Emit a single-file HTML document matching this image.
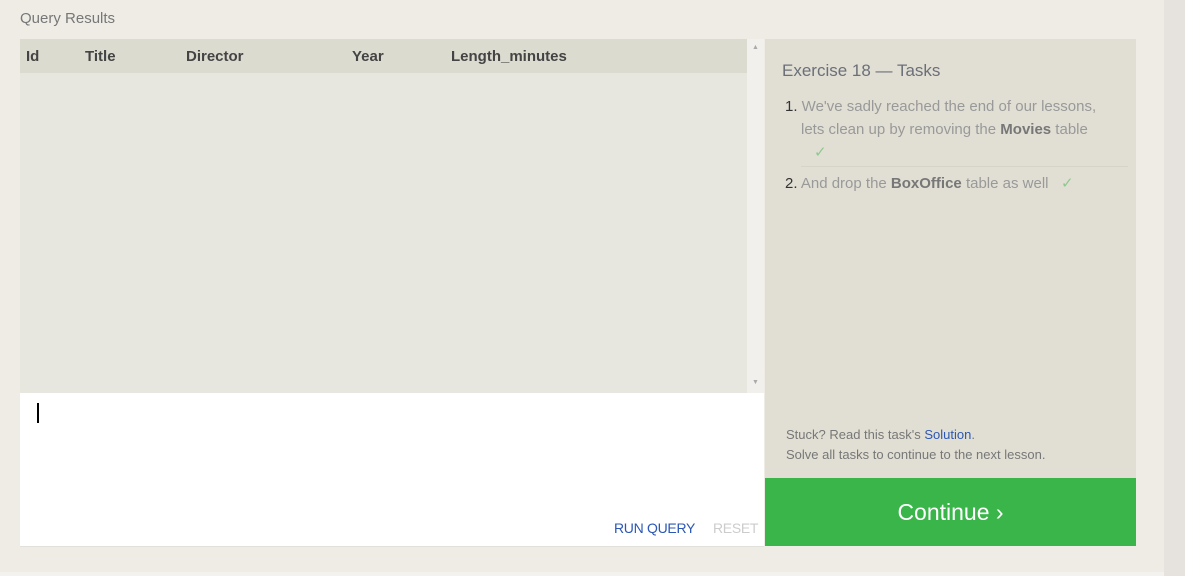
<html><head><style>
body{margin:0;width:1185px;height:576px;background:#efece5;font-family:"Liberation Sans",sans-serif;position:relative;overflow:hidden}
.a{position:absolute}
</style></head><body>
<div class="a" style="left:1164px;top:0;width:21px;height:576px;background:#e6e3df"></div>
<div class="a" style="left:0;top:572px;width:1164px;height:4px;background:#f4f2ee"></div>
<div class="a" style="left:20px;top:10px;font-size:15px;color:#777">Query Results</div>
<div class="a" style="left:20px;top:39px;width:727px;height:354px;background:#e8e7df"></div>
<div class="a" style="left:20px;top:39px;width:727px;height:34px;background:#dcdbd0;font-weight:bold;font-size:15px;color:#444">
<span class="a" style="left:6px;top:9px">Id</span><span class="a" style="left:65px;top:9px">Title</span><span class="a" style="left:166px;top:9px">Director</span><span class="a" style="left:332px;top:9px">Year</span><span class="a" style="left:431px;top:9px">Length_minutes</span></div>
<div class="a" style="left:747px;top:39px;width:17px;height:354px;background:#f1f0ed"></div>
<div class="a" style="left:752px;top:44px;font-size:7px;color:#aaa">▲</div>
<div class="a" style="left:752px;top:379px;font-size:7px;color:#aaa">▼</div>
<div class="a" style="left:20px;top:393px;width:744px;height:153px;background:#fff;border-bottom:1px solid #e2e0da"></div>
<div class="a" style="left:37px;top:403px;width:2px;height:20px;background:#000"></div>
<div class="a" style="left:614px;top:520px;font-size:14px;letter-spacing:-0.3px;color:#2c57b5">RUN QUERY</div>
<div class="a" style="left:713px;top:520px;font-size:14px;letter-spacing:-0.3px;color:#ccc">RESET</div>
<div class="a" style="left:765px;top:39px;width:371px;height:439px;background:#e1dfd4"></div>
<div class="a" style="left:782px;top:61px;font-size:17px;color:#6b6f78">Exercise 18 — Tasks</div>
<div class="a" style="left:785px;top:95px;font-size:15px;line-height:23px;color:#999;width:330px">
<div style="padding-left:16px;text-indent:-16px"><span style="color:#333">1.</span> We've sadly reached the end of our lessons, lets clean up by removing the <b style="color:#777">Movies</b> table<br>&nbsp;&nbsp;&nbsp;&nbsp;&nbsp;&nbsp;<span style="color:#8fc98f;margin-left:-12px">✓</span></div>
<div style="border-top:1px solid #d6d4c9;margin:2px 0 0 16px;width:327px"></div>
<div style="margin-top:5px"><span style="color:#333">2.</span> And drop the <b style="color:#777">BoxOffice</b> table as well &nbsp;&nbsp;<span style="color:#8fc98f">✓</span></div></div>
<div class="a" style="left:786px;top:425px;font-size:13px;line-height:20px;color:#777">Stuck? Read this task's <span style="color:#2c57b5">Solution</span>.<br>Solve all tasks to continue to the next lesson.</div>
<div class="a" style="left:765px;top:478px;width:371px;height:68px;background:#39b54a;color:#fff;font-size:23px;text-align:center;line-height:68px">Continue ›</div>
</body></html>
